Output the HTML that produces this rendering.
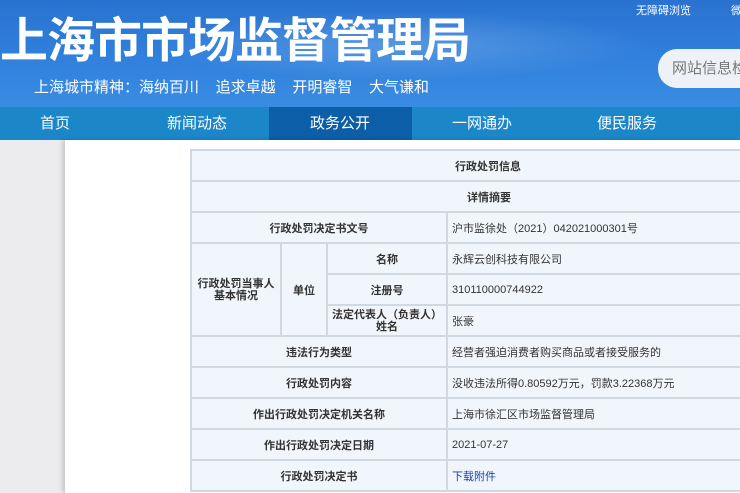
<!DOCTYPE html>
<html><head><meta charset="utf-8"><style>
*{margin:0;padding:0;box-sizing:border-box}
body{width:740px;height:493px;overflow:hidden;background:#ecebee;font-family:"Liberation Sans","Noto Sans CJK SC",sans-serif;position:relative}
.banner{position:absolute;left:0;top:0;width:740px;height:107px;background:linear-gradient(180deg,#2a72d0 0%,#2f7fdc 50%,#3a8ce2 100%)}
.banner:before{content:"";position:absolute;left:150px;top:10px;width:500px;height:70px;background:radial-gradient(ellipse at center,rgba(160,200,240,.35),rgba(160,200,240,0) 70%)}
.title{position:absolute;left:0;top:13px;color:#fff;font-size:48px;font-weight:bold;letter-spacing:-1px;line-height:58px;white-space:nowrap}
.sub{position:absolute;left:34px;top:78px;color:#fff;font-size:15px;line-height:20px;white-space:nowrap}
.acc{position:absolute;left:636px;top:2px;color:#fff;font-size:11px}
.wei{position:absolute;left:731px;top:2px;color:#fff;font-size:11px}
.search{position:absolute;left:658px;top:49px;width:100px;height:39px;background:#eef2f8;border-radius:19px;color:#777;font-size:15px;line-height:39px;padding-left:14px;white-space:nowrap}
.nav{position:absolute;left:0;top:107px;width:740px;height:33px;background:#1b86c8}
.nav span{position:absolute;top:0;line-height:33px;color:#fff;font-size:15px}
.nav .act{left:269px;width:143px;height:33px;background:#0c5ea8}
.white{position:absolute;left:65px;top:140px;width:675px;height:353px;background:#fff;box-shadow:-3px 0 4px rgba(0,0,0,.15)}
table{position:absolute;left:190px;top:149px;width:570px;border-collapse:collapse;font-size:11px;color:#333}
td{border:2px solid #d0d9e2;background:#f1f6fc;height:31px;text-align:center;padding:0}
td.v{text-align:left;padding-left:4px}
td.b{font-weight:bold}
td.h{text-align:left}
a{color:#1a3fb0}
</style></head><body>
<div class="banner"></div>
<div class="title">上海市市场监督管理局</div>
<div class="sub">上海城市精神：海纳百川&nbsp;&nbsp;&nbsp;&nbsp;追求卓越&nbsp;&nbsp;&nbsp;&nbsp;开明睿智&nbsp;&nbsp;&nbsp;&nbsp;大气谦和</div>
<div class="acc">无障碍浏览</div><div class="wei">微</div>
<div class="search">网站信息检索</div>
<div class="nav">
<span class="act"></span>
<span style="left:40px">首页</span>
<span style="left:167px">新闻动态</span>
<span style="left:310px">政务公开</span>
<span style="left:452px">一网通办</span>
<span style="left:597px">便民服务</span>
</div>
<div class="white"></div>
<table>
<colgroup><col style="width:90px"><col style="width:46px"><col style="width:120px"><col></colgroup>
<tr><td colspan="4" class="b h" style="padding-left:263px">行政处罚信息</td></tr>
<tr><td colspan="4" class="b h" style="padding-left:275px">详情摘要</td></tr>
<tr><td colspan="3" class="b">行政处罚决定书文号</td><td class="v">沪市监徐处（2021）042021000301号</td></tr>
<tr><td rowspan="3" class="b" style="line-height:12px">行政处罚当事人<br>基本情况</td><td rowspan="3" class="b">单位</td><td class="b">名称</td><td class="v">永辉云创科技有限公司</td></tr>
<tr><td class="b">注册号</td><td class="v">310110000744922</td></tr>
<tr><td class="b" style="line-height:12px">法定代表人（负责人）<br>姓名</td><td class="v">张豪</td></tr>
<tr><td colspan="3" class="b">违法行为类型</td><td class="v">经营者强迫消费者购买商品或者接受服务的</td></tr>
<tr><td colspan="3" class="b">行政处罚内容</td><td class="v">没收违法所得0.80592万元，罚款3.22368万元</td></tr>
<tr><td colspan="3" class="b">作出行政处罚决定机关名称</td><td class="v">上海市徐汇区市场监督管理局</td></tr>
<tr><td colspan="3" class="b">作出行政处罚决定日期</td><td class="v">2021-07-27</td></tr>
<tr><td colspan="3" class="b">行政处罚决定书</td><td class="v"><a>下载附件</a></td></tr>
</table>
</body></html>
